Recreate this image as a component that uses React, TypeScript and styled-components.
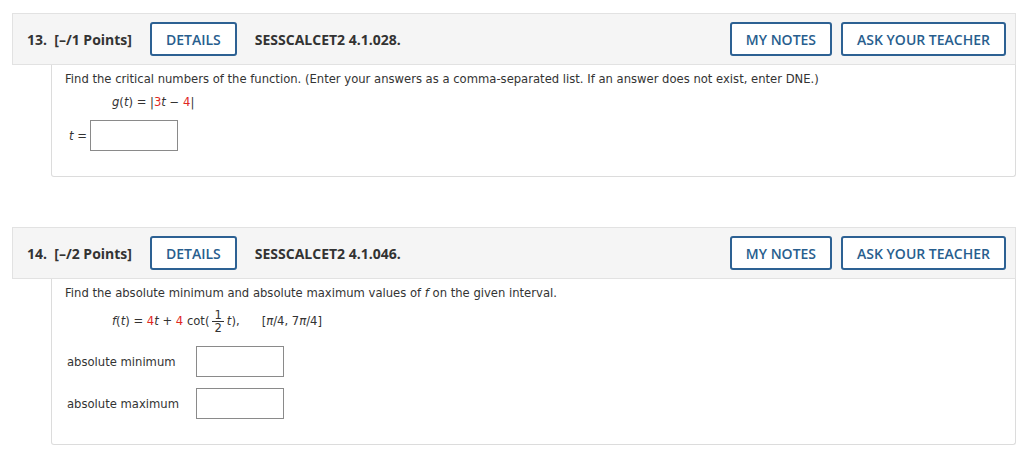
import styled, { createGlobalStyle } from 'styled-components';

const GlobalStyle = createGlobalStyle`
  body {
    margin: 0;
    background: #fff;
  }
`;

const App = () => {
  return (
    <>
      <GlobalStyle />
      <S.Page>
        <S.Question>
          <S.Header>
            <S.Number>13.&nbsp; [–/1 Points]</S.Number>
            <S.Button>DETAILS</S.Button>
            <S.Code>SESSCALCET2 4.1.028.</S.Code>
            <S.Right>
              <S.Button>MY NOTES</S.Button>
              <S.Button>ASK YOUR TEACHER</S.Button>
            </S.Right>
          </S.Header>
          <S.Body $height={112}>
            <S.Prompt>
              Find the critical numbers of the function. (Enter your answers as a comma-separated list. If an answer does not exist, enter DNE.)
            </S.Prompt>
            <S.Formula $height={16}>
              <i>g</i>(<i>t</i>) = |<S.Red>3</S.Red><i>t</i> − <S.Red>4</S.Red>|
            </S.Formula>
            <S.Answers $top={10}>
              <S.AnswerRow>
                <S.InlineLabel>
                  <i>t</i> =
                </S.InlineLabel>
                <S.Input />
              </S.AnswerRow>
            </S.Answers>
          </S.Body>
        </S.Question>

        <S.Question>
          <S.Header>
            <S.Number>14.&nbsp; [–/2 Points]</S.Number>
            <S.Button>DETAILS</S.Button>
            <S.Code>SESSCALCET2 4.1.046.</S.Code>
            <S.Right>
              <S.Button>MY NOTES</S.Button>
              <S.Button>ASK YOUR TEACHER</S.Button>
            </S.Right>
          </S.Header>
          <S.Body $height={166}>
            <S.Prompt>
              Find the absolute minimum and absolute maximum values of <i>f</i> on the given interval.
            </S.Prompt>
            <S.Formula $height={26}>
              <i>f</i>(<i>t</i>) = <S.Red>4</S.Red><i>t</i> + <S.Red>4</S.Red> cot(
              <S.Fraction>
                <span>1</span>
                <span>2</span>
              </S.Fraction>
              <i>t</i>),&nbsp;&nbsp;&nbsp;&nbsp;&nbsp; [<i>π</i>/4, 7<i>π</i>/4]
            </S.Formula>
            <S.Answers $top={12}>
              <S.AnswerRow>
                <S.FieldLabel>absolute minimum</S.FieldLabel>
                <S.Input />
              </S.AnswerRow>
              <S.AnswerRow>
                <S.FieldLabel>absolute maximum</S.FieldLabel>
                <S.Input />
              </S.AnswerRow>
            </S.Answers>
          </S.Body>
        </S.Question>
      </S.Page>
    </>
  );
};

export default App;

const S = {
  Page: styled.main`
    padding: 13px 8px 0 12px;
    display: flex;
    flex-direction: column;
    gap: 50px;
  `,
  Question: styled.section`
    display: flex;
    flex-direction: column;
  `,
  Header: styled.header`
    height: 52px;
    box-sizing: border-box;
    display: flex;
    align-items: center;
    padding: 0 9px 0 14px;
    background: #f5f5f5;
    border: 1px solid #e2e2e2;
    font-family: 'Open Sans', sans-serif;
  `,
  Right: styled.div`
    margin-left: auto;
    display: flex;
    gap: 9px;
  `,
  Body: styled.div<{ $height: number }>`
    margin-left: 39px;
    height: ${({ $height }) => $height}px;
    box-sizing: border-box;
    border: 1px solid #dcdcdc;
    border-top: none;
    border-radius: 0 0 3px 3px;
    padding: 7px 0 0 13px;
    font-family: 'DejaVu Sans', sans-serif;
    font-size: 11.6px;
    color: #333;
  `,
  Answers: styled.div<{ $top: number }>`
    display: flex;
    flex-direction: column;
    gap: 11px;
    margin-top: ${({ $top }) => $top}px;
  `,
  AnswerRow: styled.div`
    display: flex;
    align-items: center;
  `,

  // Typography
  Number: styled.span`
    font-size: 14px;
    font-weight: 700;
    color: #333;
    margin-right: 18px;
  `,
  Code: styled.span`
    font-size: 14px;
    font-weight: 700;
    color: #333;
    margin-left: 18px;
  `,
  Prompt: styled.p`
    margin: 0;
    line-height: 14px;
  `,
  Formula: styled.div<{ $height: number }>`
    margin: 8px 0 0 47px;
    display: flex;
    align-items: center;
    white-space: pre;
    height: ${({ $height }) => $height}px;
    i {
      font-style: italic;
    }
  `,
  Red: styled.span`
    color: #e0281f;
  `,
  Fraction: styled.span`
    display: inline-flex;
    flex-direction: column;
    align-items: center;
    margin: 0 3px 0 3px;
    line-height: 12px;
    span:first-child {
      border-bottom: 1px solid #333;
      padding: 0 2px;
    }
  `,
  InlineLabel: styled.span`
    padding-left: 4px;
    margin-right: 3px;
    i {
      font-style: italic;
    }
  `,
  FieldLabel: styled.span`
    width: 129px;
    margin-left: 2px;
  `,

  // Element
  Button: styled.button`
    height: 34px;
    box-sizing: border-box;
    padding: 0 14px;
    background: #fff;
    border: 2px solid #2d6193;
    border-radius: 3px;
    color: #285e8e;
    font-family: 'Open Sans', sans-serif;
    font-size: 14px;
    font-weight: 600;
  `,
  Input: styled.div`
    width: 88px;
    height: 31px;
    box-sizing: border-box;
    border: 1px solid #8a8a8a;
    background: #fff;
  `,
};
